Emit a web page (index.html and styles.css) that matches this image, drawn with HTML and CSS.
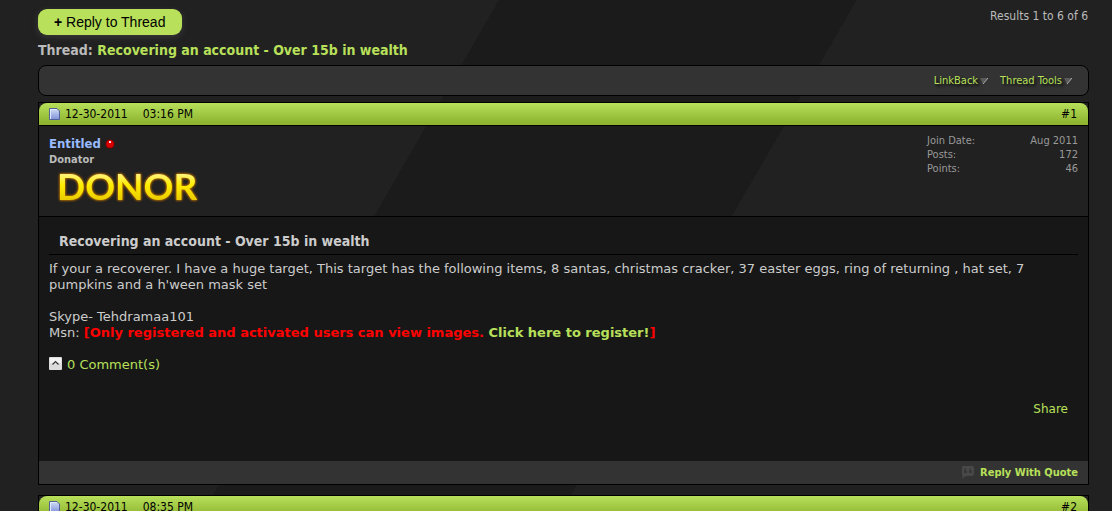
FILE: index.html
```html
<!DOCTYPE html>
<html lang="en">
<head>
    <meta charset="UTF-8">
    <meta name="viewport" content="width=device-width, initial-scale=1.0">
    <title>Recovering an account - Over 15b in wealth</title>
    <link rel="stylesheet" href="styles.css">
</head>
<body>
    <div class="page">
        <div class="top">
            <button class="reply-btn" type="button"><b>+</b> Reply to Thread</button>
            <div class="results">Results 1 to 6 of 6</div>
        </div>

        <h1 class="thread-title">Thread: <a href="#">Recovering an account - Over 15b in wealth</a></h1>

        <div class="toolbar">
            <a href="#">LinkBack<svg class="arrow" viewBox="0 0 8 6"><path d="M0 0H8L3 6z" fill="#5a5a5a"/><path d="M8 0L3 6" stroke="#aaa" fill="none"/></svg></a>
            <a href="#">Thread Tools<svg class="arrow" viewBox="0 0 8 6"><path d="M0 0H8L3 6z" fill="#5a5a5a"/><path d="M8 0L3 6" stroke="#aaa" fill="none"/></svg></a>
        </div>

        <article class="post">
            <div class="post-head">
                <svg class="doc" viewBox="0 0 11 12">
                    <defs>
                        <linearGradient id="paper" x1="0" y1="0" x2="0" y2="1">
                            <stop offset="0" stop-color="#d3e0f8"/>
                            <stop offset="1" stop-color="#7f92d8"/>
                        </linearGradient>
                    </defs>
                    <path d="M.5 .5H8L10.500 3V11.500H.5z" fill="url(#paper)" stroke="#53609a"/>
                    <path d="M1.500 11V1.500H7.500" fill="none" stroke="#e2ebfc"/>
                </svg>
                <span class="date">12-30-2011</span>
                <span>03:16 PM</span>
                <a class="number" href="#">#1</a>
            </div>

            <div class="user">
                <div>
                    <div class="name-row">
                        <a class="username" href="#">Entitled</a>
                        <svg class="status" viewBox="0 0 10 10"><circle cx="5" cy="5" r="4.500" fill="#700"/><circle cx="5" cy="5" r="3.800" fill="#d60000"/><rect x="4" y="2" width="2" height="2" fill="#ffdcdc"/></svg>
                    </div>
                    <div class="rank">Donator</div>
                    <div class="donor">DONOR</div>
                </div>
                <dl class="stats">
                    <dt>Join Date:</dt><dd>Aug 2011</dd>
                    <dt>Posts:</dt><dd>172</dd>
                    <dt>Points:</dt><dd>46</dd>
                </dl>
            </div>

            <div class="post-body">
                <h2 class="post-title">Recovering an account - Over 15b in wealth</h2>
                <p>If your a recoverer. I have a huge target, This target has the following items, 8 santas, christmas cracker, 37 easter eggs, ring of returning , hat set, 7 pumpkins and a h'ween mask set</p>
                <p>Skype- Tehdramaa101<br>Msn: <strong class="notice">[Only registered and activated users can view images. <a href="#">Click here to register!</a>]</strong></p>
                <a class="comments" href="#">
                    <svg viewBox="0 0 13 13"><rect width="13" height="13" rx="1" fill="#dcdcdc"/><path d="M1 1H12V6H1z" fill="#f2f2f2"/><path d="M3.500 7.500L6.500 4.500L9.500 7.500" fill="none" stroke="#333" stroke-width="1.200"/></svg>
                    0 Comment(s)
                </a>
                <a class="share" href="#">Share</a>
            </div>

            <div class="post-foot">
                <svg class="quote" viewBox="0 0 14 13"><path d="M2 0H11Q13 0 13 2V8Q13 10 11 10H5L1 13L2 10Q1 10 1 8V2Q1 0 2 0z" fill="#484848"/><path d="M5 2Q3 3 3 5V7H6V5H5zM10 2Q8 3 8 5V7H11V5H10z" fill="#363636"/></svg>
                <a href="#">Reply With Quote</a>
            </div>
        </article>

        <article class="post">
            <div class="post-head">
                <svg class="doc" viewBox="0 0 11 12">
                    <path d="M.5 .5H8L10.500 3V11.500H.5z" fill="url(#paper)" stroke="#53609a"/>
                    <path d="M1.500 11V1.500H7.500" fill="none" stroke="#e2ebfc"/>
                </svg>
                <span class="date">12-30-2011</span>
                <span>08:35 PM</span>
                <a class="number" href="#">#2</a>
            </div>
        </article>
    </div>
</body>
</html>
```
FILE: styles.css
```css
:root {
    --lime: #b8e05a;
    --grey: #333333;
    --text: #cccccc;
    --ui: Tahoma, 'DejaVu Sans Condensed', 'DejaVu Sans', sans-serif;
}

* {
    margin: 0;
    padding: 0;
    box-sizing: border-box;
}

body {
    height: 100vh;
    overflow: hidden;
    background: linear-gradient(120deg, #212121 432px, #1b1b1b 432px, #1b1b1b 742px, #212121 742px);
    color: var(--text);
    font: 12px/14px var(--ui);
}

a {
    color: var(--lime);
    text-decoration: none;
}

.page {
    padding: 9px 23px 0 38px;
}

.top {
    display: flex;
    justify-content: space-between;
    margin-bottom: 6px;
}

.reply-btn {
    height: 26px;
    padding: 0 17px 0 16px;
    border: none;
    border-radius: 9px;
    background: var(--lime);
    box-shadow: 0 2px 6px #3a3a3a;
    color: #000;
    font: 14px 'Liberation Sans', Arial, sans-serif;
}

.results {
    padding-right: 1px;
    color: #bbb;
}

.thread-title {
    margin-bottom: 6px;
    color: #bbb;
    font-size: 14px;
    line-height: 18px;
}

.toolbar {
    display: flex;
    justify-content: flex-end;
    align-items: center;
    gap: 12px;
    height: 31px;
    margin-bottom: 6px;
    padding-right: 16px;
    border: 1px solid #000;
    border-radius: 8px;
    background: var(--grey);
    font-size: 11px;
    text-shadow: 2px 2px 3px #000;
}

.arrow {
    width: 8px;
    height: 6px;
    margin-left: 2px;
}

.post {
    margin-bottom: 10px;
    border: 1px solid #000;
}

.post-head {
    display: flex;
    align-items: center;
    height: 23px;
    padding: 0 11px 0 10px;
    border-bottom: 1px solid #000;
    border-radius: 8px 8px 0 0;
    background: linear-gradient(#b8e05a, #8fb530 90%);
    color: #000;
}

.doc {
    width: 11px;
    height: 12px;
    margin-right: 5px;
}

.date {
    margin-right: 15px;
}

.number {
    margin-left: auto;
    color: #000;
}

.user {
    display: flex;
    justify-content: space-between;
    padding: 8px 10px;
    border-bottom: 1px solid #000;
}

.name-row {
    display: flex;
    align-items: center;
    gap: 4px;
    height: 20px;
}

.username {
    color: #99bbff;
    font-size: 13px;
    font-weight: bold;
}

.status {
    width: 10px;
    height: 10px;
}

.rank {
    color: #bbb;
    font-size: 11px;
    font-weight: bold;
    line-height: 12px;
}

.donor {
    height: 42px;
    padding-left: 8px;
    background: linear-gradient(#fff27a 20%, #ffee00 45%, #e8c800 85%);
    -webkit-background-clip: text;
    background-clip: text;
    color: transparent;
    filter: drop-shadow(0 0 1px #c67800) drop-shadow(0 0 1px #a86400);
    font: bold 37px/40px Lato, sans-serif;
}

.stats {
    display: grid;
    grid-template-columns: auto auto;
    align-content: start;
    width: 151px;
    color: #999;
    font-size: 11px;
}

.stats dd {
    text-align: right;
}

.post-body {
    display: flow-root;
    min-height: 244px;
    padding: 14px 10px 0;
    background: #171717;
    font: 13px/16px Verdana, 'DejaVu Sans', sans-serif;
}

.post-title {
    margin-bottom: 6px;
    padding: 0 10px 3px;
    border-bottom: 1px solid #000;
    font: bold 14px/20px var(--ui);
}

.post-body p {
    margin-bottom: 16px;
}

.notice {
    color: #ff0000;
}

.comments {
    display: flex;
    gap: 5px;
}

.comments svg {
    width: 13px;
    height: 13px;
}

.share {
    display: block;
    margin-top: 28px;
    padding-right: 10px;
    font-size: 12px;
    text-align: right;
}

.post-foot {
    display: flex;
    justify-content: flex-end;
    align-items: center;
    gap: 5px;
    height: 23px;
    padding-right: 10px;
    background: var(--grey);
    font-size: 11px;
    font-weight: bold;
}

.quote {
    width: 14px;
    height: 13px;
}
```
